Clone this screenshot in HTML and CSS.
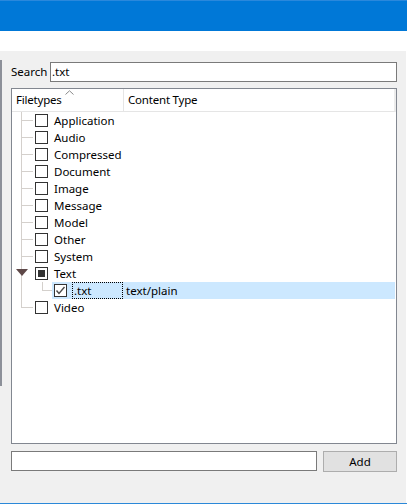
FILE: index.html
```html
<!DOCTYPE html>
<html>
<head>
<meta charset="utf-8">
<link rel="stylesheet" href="styles.css">
</head>
<body>
<div class="titlebar"></div>
<div class="band"></div>
<div class="panel">
  <div class="edge"></div>
  <div class="content">
    <div class="search-row">
      <span class="search-label">Search</span>
      <div class="input search-input">.txt</div>
    </div>
    <div class="tree">
      <div class="header">
        <div class="col col1">Filetypes<svg class="sort" width="9" height="5" viewBox="0 0 9 5"><polyline points="0.5,4.5 4.5,0.8 8.5,4.5" fill="none" stroke="#8a8a8a" stroke-width="1"/></svg></div>
        <div class="col col2">Content Type</div>
      </div>
      <div class="rows">
        <div class="row"><span class="guide"></span><span class="cb"></span><span class="label">Application</span></div>
        <div class="row"><span class="guide"></span><span class="cb"></span><span class="label">Audio</span></div>
        <div class="row"><span class="guide"></span><span class="cb"></span><span class="label">Compressed</span></div>
        <div class="row"><span class="guide"></span><span class="cb"></span><span class="label">Document</span></div>
        <div class="row"><span class="guide"></span><span class="cb"></span><span class="label">Image</span></div>
        <div class="row"><span class="guide"></span><span class="cb"></span><span class="label">Message</span></div>
        <div class="row"><span class="guide"></span><span class="cb"></span><span class="label">Model</span></div>
        <div class="row"><span class="guide"></span><span class="cb"></span><span class="label">Other</span></div>
        <div class="row"><span class="guide"></span><span class="cb"></span><span class="label">System</span></div>
        <div class="row"><span class="guide guide-exp"><svg class="expander" width="12" height="7" viewBox="0 0 12 7"><polygon points="0,0 12,0 6,7" fill="#5e4848"/></svg></span><span class="cb cb-partial"><span class="cb-fill"></span></span><span class="label">Text</span></div>
        <div class="row"><span class="guide guide-pass"></span><span class="guide-child"></span>
          <div class="sel">
            <span class="cb cb-checked"><svg width="11" height="11" viewBox="0 0 11 11"><polyline points="1.5,5.5 4,8.5 9.5,2" fill="none" stroke="#4a4a4a" stroke-width="1.4"/></svg></span>
            <span class="focus">.txt</span>
            <span class="ctype">text/plain</span>
          </div>
        </div>
        <div class="row"><span class="guide guide-last"></span><span class="cb"></span><span class="label">Video</span></div>
      </div>
    </div>
    <div class="bottom-row">
      <div class="input add-input"></div>
      <div class="btn">Add</div>
    </div>
  </div>
</div>
<div class="bottomline"></div>
</body>
</html>
```
FILE: styles.css
```css
html, body {
  margin: 0;
  padding: 0;
  background: #ffffff;
}
body {
  width: 407px;
  height: 504px;
  overflow: hidden;
  font-family: "Noto Sans", "DejaVu Sans", sans-serif;
  font-size: 11.5px;
  color: #000;
}
.titlebar {
  height: 30px;
  background: #0078d7;
  border-top: 1px solid #2a88dc;
}
.band {
  height: 20px;
  background: #ffffff;
}
.panel {
  display: flex;
  align-items: flex-start;
  width: 406px;
  height: 452px;
  background: #f0f0f0;
}
.edge {
  width: 2px;
  height: 326px;
  margin-top: 9px;
  background: #8c9099;
}
.content {
  margin-left: 9px;
  width: 386px;
  padding-top: 11px;
}
.search-row {
  display: flex;
  height: 20px;
}
.search-label {
  width: 39px;
  line-height: 20px;
}
.input {
  box-sizing: border-box;
  height: 20px;
  border: 1px solid #7a7a7a;
  background: #fff;
}
.search-input {
  width: 347px;
  padding-left: 1px;
  line-height: 18px;
}
.tree {
  box-sizing: border-box;
  margin-top: 6px;
  height: 356px;
  border: 1px solid #828790;
  background: #fff;
}
.header {
  display: flex;
  height: 22px;
  border-bottom: 1px solid #e5e5e5;
  border-right: 2px solid #ececec;
}
.col {
  box-sizing: border-box;
  line-height: 22px;
  padding-left: 4px;
  letter-spacing: -0.2px;
}
.col1 {
  position: relative;
  width: 112px;
  border-right: 1px solid #e5e5e5;
}
.sort {
  position: absolute;
  left: 53px;
  top: 1px;
}
.rows {
  display: flex;
  flex-direction: column;
}
.row {
  display: flex;
  align-items: center;
  height: 17px;
}
.guide {
  position: relative;
  width: 23px;
  height: 17px;
  flex: none;
  background-image:
    linear-gradient(#d4d0cc, #d4d0cc),
    linear-gradient(#d4d0cc, #d4d0cc);
  background-repeat: no-repeat;
  background-size: 1px 17px, 11px 1px;
  background-position: 9px 0, 10px 8px;
}
.guide-exp {
  background-size: 1px 17px;
  background-position: 9px 0;
}
.guide-pass {
  background-size: 1px 17px;
  background-position: 9px 0;
}
.guide-last {
  background-size: 1px 9px, 11px 1px;
}
.expander {
  position: absolute;
  left: 4px;
  top: 4px;
}
.guide-child {
  width: 17px;
  height: 17px;
  flex: none;
  background-image:
    linear-gradient(#d4d0cc, #d4d0cc),
    linear-gradient(#d4d0cc, #d4d0cc);
  background-repeat: no-repeat;
  background-size: 1px 9px, 9px 1px;
  background-position: 7px 0, 8px 8px;
}
.cb {
  box-sizing: border-box;
  width: 13px;
  height: 13px;
  flex: none;
  border: 1px solid #333333;
  background: #fff;
}
.cb-partial {
  padding: 2px;
}
.cb-fill {
  display: block;
  width: 7px;
  height: 7px;
  background: #333333;
}
.cb-checked {
  display: flex;
  align-items: center;
  justify-content: center;
}
.label {
  margin-left: 6px;
  line-height: 17px;
  white-space: nowrap;
}
.sel {
  display: flex;
  align-items: center;
  width: 343px;
  height: 17px;
  background: #cce8ff;
  padding-left: 2px;
  box-sizing: border-box;
}
.focus {
  box-sizing: border-box;
  width: 51px;
  height: 17px;
  margin-left: 5px;
  padding-left: 1px;
  line-height: 15px;
  border: 1px dotted #000;
}
.ctype {
  margin-left: 3px;
  line-height: 17px;
}
.bottom-row {
  display: flex;
  margin-top: 7px;
}
.add-input {
  width: 306px;
}
.btn {
  box-sizing: border-box;
  width: 74px;
  height: 21px;
  margin-left: 6px;
  border: 1px solid #adadad;
  background: #e1e1e1;
  text-align: center;
  line-height: 19px;
}
.bottomline {
  height: 1px;
  background: #2b88d8;
}
```
